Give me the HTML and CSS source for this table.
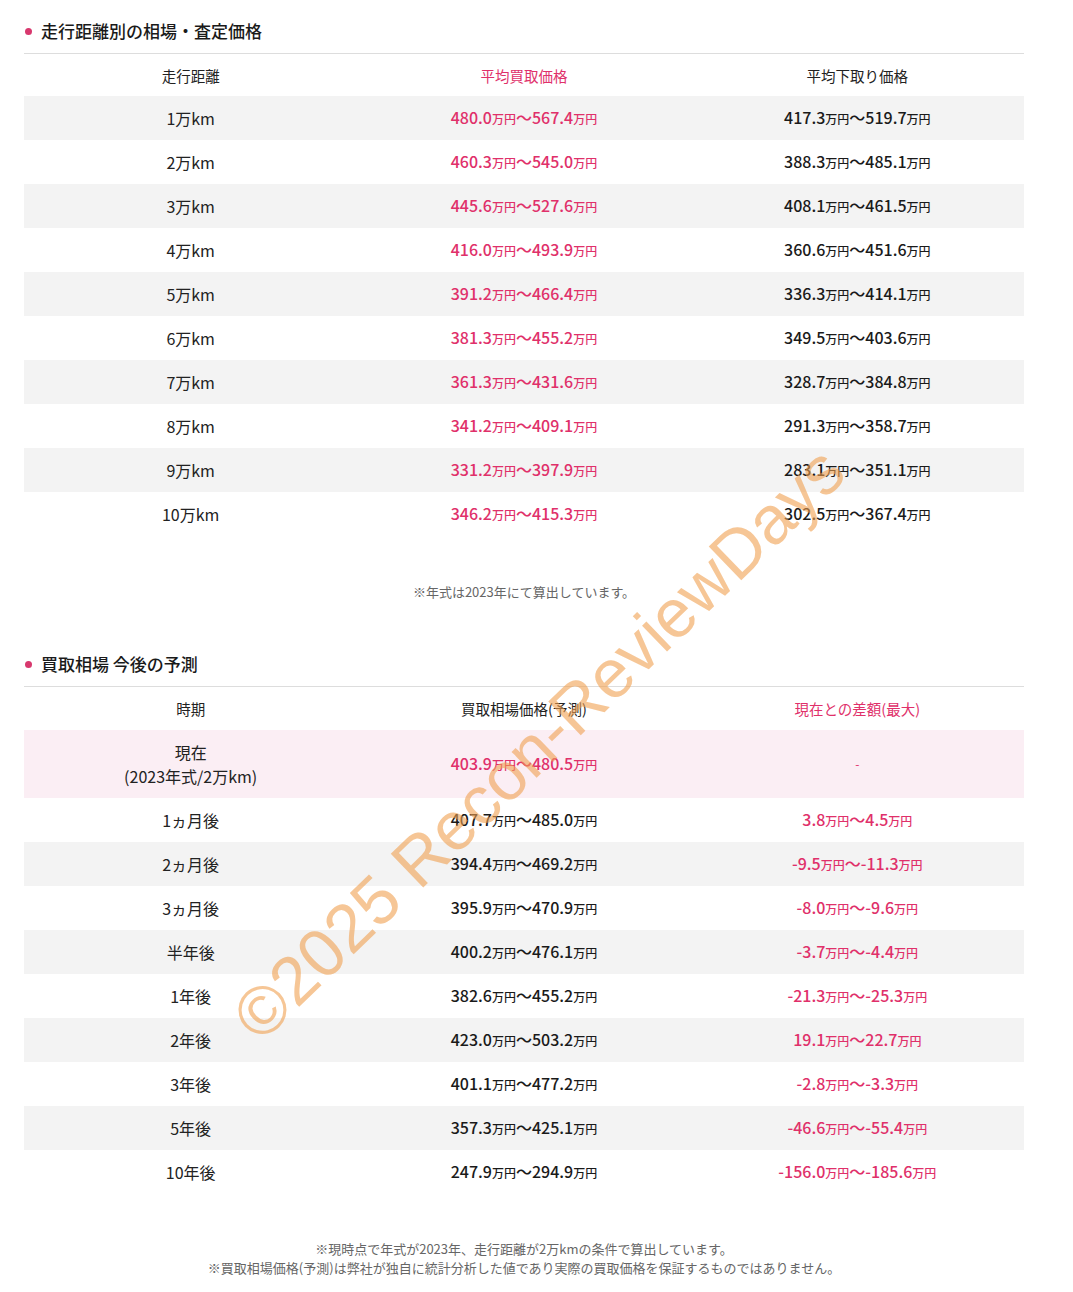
FILE: index.html
```html
<!DOCTYPE html>
<html lang="ja">
<head>
<meta charset="utf-8">
<title>走行距離別の相場・査定価格</title>
<link rel="stylesheet" href="styles.css">
</head>
<body>
<div class="page">
  <section class="block block-first">
    <h2 class="title"><span class="dot"></span>走行距離別の相場・査定価格</h2>
    <table class="tbl">
      <colgroup><col><col><col></colgroup>
      <thead>
        <tr><th>走行距離</th><th class="pink">平均買取価格</th><th>平均下取り価格</th></tr>
      </thead>
      <tbody>
        <tr><td>1万km</td><td class="pink num">480.0<small>万円</small>～567.4<small>万円</small></td><td class="num">417.3<small>万円</small>～519.7<small>万円</small></td></tr>
        <tr><td>2万km</td><td class="pink num">460.3<small>万円</small>～545.0<small>万円</small></td><td class="num">388.3<small>万円</small>～485.1<small>万円</small></td></tr>
        <tr><td>3万km</td><td class="pink num">445.6<small>万円</small>～527.6<small>万円</small></td><td class="num">408.1<small>万円</small>～461.5<small>万円</small></td></tr>
        <tr><td>4万km</td><td class="pink num">416.0<small>万円</small>～493.9<small>万円</small></td><td class="num">360.6<small>万円</small>～451.6<small>万円</small></td></tr>
        <tr><td>5万km</td><td class="pink num">391.2<small>万円</small>～466.4<small>万円</small></td><td class="num">336.3<small>万円</small>～414.1<small>万円</small></td></tr>
        <tr><td>6万km</td><td class="pink num">381.3<small>万円</small>～455.2<small>万円</small></td><td class="num">349.5<small>万円</small>～403.6<small>万円</small></td></tr>
        <tr><td>7万km</td><td class="pink num">361.3<small>万円</small>～431.6<small>万円</small></td><td class="num">328.7<small>万円</small>～384.8<small>万円</small></td></tr>
        <tr><td>8万km</td><td class="pink num">341.2<small>万円</small>～409.1<small>万円</small></td><td class="num">291.3<small>万円</small>～358.7<small>万円</small></td></tr>
        <tr><td>9万km</td><td class="pink num">331.2<small>万円</small>～397.9<small>万円</small></td><td class="num">283.1<small>万円</small>～351.1<small>万円</small></td></tr>
        <tr><td>10万km</td><td class="pink num">346.2<small>万円</small>～415.3<small>万円</small></td><td class="num">302.5<small>万円</small>～367.4<small>万円</small></td></tr>
      </tbody>
    </table>
    <p class="note note-first">※年式は2023年にて算出しています。</p>
  </section>

  <section class="block block-second">
    <h2 class="title"><span class="dot"></span>買取相場 今後の予測</h2>
    <table class="tbl tbl-second">
      <colgroup><col><col><col></colgroup>
      <thead>
        <tr><th>時期</th><th>買取相場価格(予測)</th><th class="pink">現在との差額(最大)</th></tr>
      </thead>
      <tbody>
        <tr class="now"><td>現在<br>(2023年式/2万km)</td><td class="pink num">403.9<small>万円</small>～480.5<small>万円</small></td><td class="pink dash">-</td></tr>
        <tr><td>1ヵ月後</td><td class="num">407.7<small>万円</small>～485.0<small>万円</small></td><td class="pink num">3.8<small>万円</small>～4.5<small>万円</small></td></tr>
        <tr><td>2ヵ月後</td><td class="num">394.4<small>万円</small>～469.2<small>万円</small></td><td class="pink num">-9.5<small>万円</small>～-11.3<small>万円</small></td></tr>
        <tr><td>3ヵ月後</td><td class="num">395.9<small>万円</small>～470.9<small>万円</small></td><td class="pink num">-8.0<small>万円</small>～-9.6<small>万円</small></td></tr>
        <tr><td>半年後</td><td class="num">400.2<small>万円</small>～476.1<small>万円</small></td><td class="pink num">-3.7<small>万円</small>～-4.4<small>万円</small></td></tr>
        <tr><td>1年後</td><td class="num">382.6<small>万円</small>～455.2<small>万円</small></td><td class="pink num">-21.3<small>万円</small>～-25.3<small>万円</small></td></tr>
        <tr><td>2年後</td><td class="num">423.0<small>万円</small>～503.2<small>万円</small></td><td class="pink num">19.1<small>万円</small>～22.7<small>万円</small></td></tr>
        <tr><td>3年後</td><td class="num">401.1<small>万円</small>～477.2<small>万円</small></td><td class="pink num">-2.8<small>万円</small>～-3.3<small>万円</small></td></tr>
        <tr><td>5年後</td><td class="num">357.3<small>万円</small>～425.1<small>万円</small></td><td class="pink num">-46.6<small>万円</small>～-55.4<small>万円</small></td></tr>
        <tr><td>10年後</td><td class="num">247.9<small>万円</small>～294.9<small>万円</small></td><td class="pink num">-156.0<small>万円</small>～-185.6<small>万円</small></td></tr>
      </tbody>
    </table>
    <p class="note note-last">※現時点で年式が2023年、走行距離が2万kmの条件で算出しています。<br>※買取相場価格(予測)は弊社が独自に統計分析した値であり実際の買取価格を保証するものではありません。</p>
  </section>

  <div class="watermark">©2025 Recon-ReviewDays</div>
</div>
</body>
</html>
```

FILE: styles.css
```css
html, body {
  margin: 0;
  padding: 0;
  background: #ffffff;
}

body {
  font-family: "Noto Sans CJK JP", "Noto Sans", sans-serif;
  color: #222222;
}

.page {
  position: relative;
  width: 1000px;
  padding: 0 24px;
  min-height: 1292px;
  box-sizing: content-box;
}

.block-first {
  padding-top: 19px;
}

.block-second {
  padding-top: 51px;
}

.title {
  display: flex;
  align-items: center;
  margin: 0;
  padding: 0 0 10px 0;
  border-bottom: 1px solid #dddddd;
  font-size: 17px;
  line-height: 24px;
  font-weight: 500;
  color: #1a1a1a;
}

.dot {
  display: inline-block;
  width: 7px;
  height: 7px;
  border-radius: 50%;
  background: #d8386e;
  margin: 0 9px 0 1px;
}

.tbl {
  width: 100%;
  border-collapse: collapse;
  table-layout: fixed;
}

.tbl col {
  width: 33.333%;
}

.tbl th {
  height: 42px;
  padding: 0;
  font-size: 14.5px;
  font-weight: 400;
  color: #222222;
  text-align: center;
  vertical-align: middle;
}

.tbl-second th {
  height: 43px;
}

.tbl td {
  height: 44px;
  padding: 0;
  font-size: 16px;
  line-height: 24px;
  text-align: center;
  vertical-align: middle;
  color: #222222;
}

.tbl td.num {
  font-weight: 500;
  color: #1a1a1a;
}

.tbl small {
  font-size: 12px;
}

.tbl tbody tr:nth-child(odd) {
  background: #f3f3f3;
}

.tbl tbody tr.now {
  background: #fbeef4;
}

.tbl tbody tr.now td {
  height: 68px;
}

.tbl .pink,
.tbl th.pink,
.tbl td.num.pink {
  color: #e0306a;
}

.tbl td.dash {
  font-size: 12px;
}

.note {
  margin: 0;
  text-align: center;
  font-size: 13px;
  line-height: 19px;
  color: #666666;
}

.note-first {
  margin-top: 46px;
}

.note-last {
  margin-top: 45px;
}

.watermark {
  position: absolute;
  left: 538px;
  top: 743px;
  transform: translate(-50%, -50%) rotate(-44deg);
  font-family: "Liberation Sans", Arial, sans-serif;
  font-size: 68px;
  line-height: 1;
  white-space: nowrap;
  color: rgba(240, 160, 80, 0.6);
  pointer-events: none;
  z-index: 5;
}
```
